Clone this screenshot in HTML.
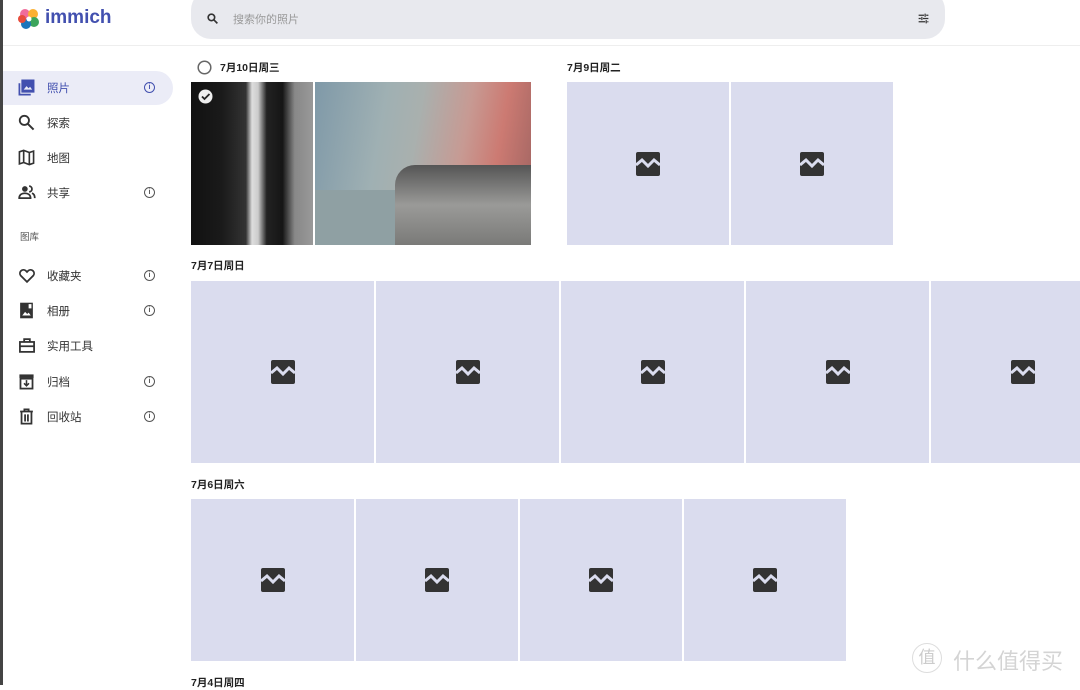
<!DOCTYPE html><html><head><meta charset="utf-8"><style>
body{margin:0;width:1080px;height:685px;overflow:hidden;background:#fff;font-family:"Liberation Sans","Noto Sans CJK SC",sans-serif;position:relative}
.a{position:absolute}
.lb{left:0;top:0;width:3px;height:685px;background:#444}
.nav{left:3px;width:170px;height:34px;font-size:11.5px;color:#333}
.nav .ic{position:absolute;left:15px;top:8px}
.nav .t{position:absolute;left:44px;top:9px}
.nav .i{position:absolute;left:141px;top:11px;width:9px;height:9px;border:1.3px solid #555;border-radius:50%;font-size:7px;line-height:9px;text-align:center;color:#555;font-weight:bold}
.tile{position:absolute;background:#dadcee}
.tile svg{position:absolute;left:50%;top:50%;margin:-13px 0 0 -13px}
.d{position:absolute;font-size:10.5px;font-weight:bold;color:#222}
</style></head><body>
<div class="a lb"></div>
<svg class="a" style="left:17px;top:7px" width="24" height="24" viewBox="0 0 24 24"><circle cx="8" cy="7" r="5" fill="#f06c9b"/><circle cx="16" cy="7" r="5" fill="#fbb034"/><circle cx="17" cy="15" r="5" fill="#3ca55c"/><circle cx="9" cy="17" r="5" fill="#1b75bb"/><circle cx="5" cy="12" r="4" fill="#e74c3c"/><circle cx="12" cy="12" r="2.5" fill="#fff"/></svg>
<div class="a" style="left:45px;top:7px;font-size:19px;color:#4250af;font-weight:bold">immich</div>
<div class="a" style="left:191px;top:-10px;width:754px;height:49px;background:#e8e9ee;border-radius:20px"></div>
<svg class="a" style="left:206px;top:12px" width="13" height="13" viewBox="0 0 24 24"><circle cx="10" cy="10" r="6" fill="none" stroke="#333" stroke-width="3"/><path d="M14 14l7 7" stroke="#333" stroke-width="3"/></svg>
<div class="a" style="left:233px;top:11px;font-size:11px;color:#999">搜索你的照片</div>
<svg class="a" style="left:917px;top:12px" width="13" height="13" viewBox="0 0 24 24"><path d="M3 6h10M17 6h4M3 12h4M11 12h10M3 18h12M19 18h2M15 3v6M9 9v6M17 15v6" stroke="#333" stroke-width="2.2" fill="none"/></svg>
<div class="a" style="left:3px;top:45px;width:1077px;height:1px;background:#eee"></div>
<div class="a" style="left:3px;top:71px;width:170px;height:34px;background:#ebecf7;border-radius:0 17px 17px 0"></div>
<div class="a nav" style="top:71px;color:#4250af"><svg class="ic" width="17" height="17" viewBox="0 0 24 24"><path d="M6 2h16v16H6zM2 6v16h16" fill="none" stroke="#4250af" stroke-width="2.5"/><rect x="6" y="2" width="16" height="16" fill="#4250af"/><path d="M8 15l4-5 3 3 2-2 3 4z" fill="#ebecf7"/></svg><span class="t">照片</span><span class="i" style="border-color:#4250af;color:#4250af">i</span></div>
<div class="a nav" style="top:106px"><svg class="ic" width="17" height="17" viewBox="0 0 24 24"><circle cx="9" cy="9" r="6.5" fill="none" stroke="#333" stroke-width="2.6"/><path d="M14 14l8 8" stroke="#333" stroke-width="2.8"/></svg><span class="t">探索</span></div>
<div class="a nav" style="top:141px"><svg class="ic" width="17" height="17" viewBox="0 0 24 24"><path d="M2 4l6-2 8 3 6-2v17l-6 2-8-3-6 2zM8 2v17M16 5v17" fill="none" stroke="#333" stroke-width="2.3"/></svg><span class="t">地图</span></div>
<div class="a nav" style="top:176px"><svg class="ic" width="18" height="17" viewBox="0 0 24 24"><circle cx="9" cy="7" r="4" fill="#333"/><path d="M1 20c0-5 4-7 8-7s8 2 8 7z" fill="none" stroke="#333" stroke-width="2.5"/><path d="M15 3a4 4 0 010 8M19 13c3 1 4 3 4 7" fill="none" stroke="#333" stroke-width="2.5"/></svg><span class="t">共享</span><span class="i">i</span></div>
<div class="a" style="left:20px;top:229px;font-size:9.5px;color:#555">图库</div>
<div class="a nav" style="top:259px"><svg class="ic" width="18" height="17" viewBox="0 0 24 24"><path d="M12 21l-9-9a5 5 0 017-7l2 2 2-2a5 5 0 017 7z" fill="none" stroke="#333" stroke-width="2.5"/></svg><span class="t">收藏夹</span><span class="i">i</span></div>
<div class="a nav" style="top:294px"><svg class="ic" width="17" height="17" viewBox="0 0 24 24"><rect x="3" y="1" width="18" height="22" fill="#333"/><path d="M6 19l4-5 3 3 2-2 3 4z" fill="#fff"/><rect x="15" y="3" width="4" height="6" fill="#fff"/></svg><span class="t">相册</span><span class="i">i</span></div>
<div class="a nav" style="top:329px"><svg class="ic" width="18" height="17" viewBox="0 0 24 24"><rect x="2" y="7" width="20" height="14" fill="none" stroke="#333" stroke-width="2.5"/><path d="M8 7V3h8v4M2 13h20" fill="none" stroke="#333" stroke-width="2.5"/></svg><span class="t">实用工具</span></div>
<div class="a nav" style="top:365px"><svg class="ic" width="17" height="17" viewBox="0 0 24 24"><rect x="2" y="2" width="20" height="5" fill="#333"/><rect x="3.5" y="8" width="17" height="14" fill="none" stroke="#333" stroke-width="2.5"/><path d="M12 10v8M8.5 14.5l3.5 3.5 3.5-3.5" stroke="#333" stroke-width="2.2" fill="none"/></svg><span class="t">归档</span><span class="i">i</span></div>
<div class="a nav" style="top:400px"><svg class="ic" width="17" height="17" viewBox="0 0 24 24"><path d="M3 5h18M9 5V2h6v3M5 5v17h14V5M10 9v10M14 9v10" fill="none" stroke="#333" stroke-width="2.5"/></svg><span class="t">回收站</span><span class="i">i</span></div>

<svg class="a" style="left:197px;top:60px" width="15" height="15"><circle cx="7.5" cy="7.5" r="6.3" fill="none" stroke="#666" stroke-width="1.5"/></svg>
<div class="d" style="left:220px;top:60px">7月10日周三</div>
<div class="d" style="left:567px;top:60px">7月9日周二</div>
<div class="a" style="left:191px;top:82px;width:122px;height:163px;background:linear-gradient(90deg,#111 0%,#1a1a1a 25%,#333 45%,#ddd 50%,#ccc 55%,#222 62%,#151515 75%,#888 85%,#999 100%)"></div>
<svg class="a" style="left:198px;top:89px" width="15" height="15"><circle cx="7.5" cy="7.5" r="7" fill="#eee"/><path d="M4 7.5l2.5 2.5 5-5" stroke="#222" stroke-width="1.8" fill="none"/></svg>
<div class="a" style="left:315px;top:82px;width:216px;height:163px;background:linear-gradient(100deg,#7f99a8 0%,#9fb0b3 30%,#a9b0ae 45%,#c79a93 65%,#cc7a72 80%,#9b6260 100%)"></div>
<div class="a" style="left:395px;top:165px;width:136px;height:80px;background:linear-gradient(180deg,#555 0%,#9a9a98 50%,#7a7a78 100%);border-radius:20px 0 0 0"></div>
<div class="a" style="left:315px;top:190px;width:80px;height:55px;background:#8fa0a3"></div>
<div class="tile" style="left:567px;top:82px;width:162px;height:163px"></div>
<div class="tile" style="left:731px;top:82px;width:162px;height:163px"></div>
<div class="d" style="left:191px;top:258px">7月7日周日</div>
<div class="tile" style="left:191px;top:281px;width:183px;height:182px"></div>
<div class="tile" style="left:376px;top:281px;width:183px;height:182px"></div>
<div class="tile" style="left:561px;top:281px;width:183px;height:182px"></div>
<div class="tile" style="left:746px;top:281px;width:183px;height:182px"></div>
<div class="tile" style="left:931px;top:281px;width:183px;height:182px"></div>
<div class="d" style="left:191px;top:477px">7月6日周六</div>
<div class="tile" style="left:191px;top:499px;width:163px;height:162px"></div>
<div class="tile" style="left:356px;top:499px;width:162px;height:162px"></div>
<div class="tile" style="left:520px;top:499px;width:162px;height:162px"></div>
<div class="tile" style="left:684px;top:499px;width:162px;height:162px"></div>
<div class="d" style="left:191px;top:675px">7月4日周四</div>
<div class="a" style="left:912px;top:643px;width:28px;height:28px;border:1.5px solid #ddd;border-radius:50%;color:#ccc;font-size:17px;text-align:center;line-height:28px">值</div>
<div class="a" style="left:953px;top:644px;font-size:22px;color:#d4d4d4">什么值得买</div>
<script>
document.querySelectorAll('.tile').forEach(function(t){t.innerHTML='<svg width="26" height="26" viewBox="0 0 26 26"><rect x="1" y="1" width="24" height="24" rx="2" fill="#333"/><path d="M1 14l6-5 6 6 6-6 6 5" stroke="#dadcee" stroke-width="3" fill="none"/></svg>'});
</script>
</body></html>
